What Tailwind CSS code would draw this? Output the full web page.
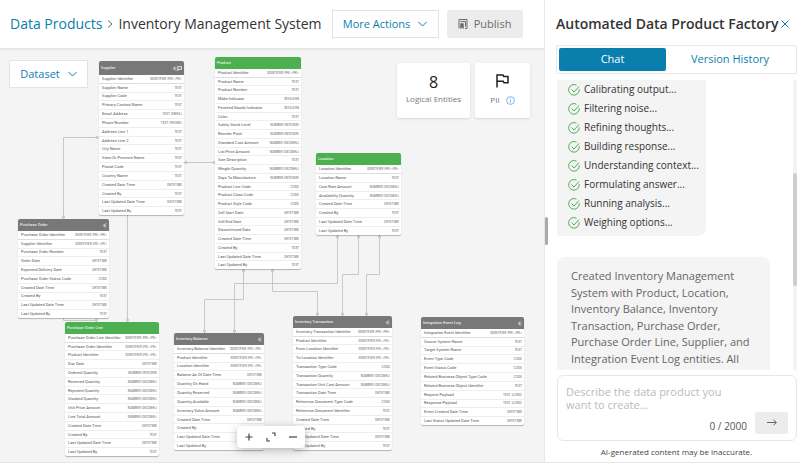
<!DOCTYPE html>
<html lang="en">
<head>
    <meta charset="UTF-8">
    <meta name="viewport" content="width=device-width, initial-scale=1.0">
    <title>Inventory Management System</title>

    <script src="https://cdn.jsdelivr.net/npm/@tailwindcss/browser@4"></script>
</head>
<body class="flex h-screen overflow-hidden bg-white font-['Open_Sans','Noto_Sans',sans-serif] text-[#333]">

    <main class="flex min-w-0 flex-1 flex-col border-b border-[#e6e6e6]">
        <!-- Top bar -->
        <header class="flex h-[50px] shrink-0 items-center border-b-2 border-[#e6e6e6] pl-[10px] whitespace-nowrap">
            <nav class="flex items-center text-sm" aria-label="Breadcrumb">
                <a href="#" class="text-[#0a7fad]">Data Products</a>
                <svg class="mx-[5px] h-2 w-[6px]" viewBox="0 0 6 8" fill="none" stroke="#666" stroke-width="1"><path d="M1 .5 5 4 1 7.500"/></svg>
                <h1>Inventory Management System</h1>
            </nav>
            <button class="ml-[10px] flex h-7 w-[107px] items-center justify-center gap-2 border border-[#e3e3e3] text-[11px] text-[#0a7fad]">
                More Actions
                <svg class="h-[6px] w-[9px]" viewBox="0 0 9 6" fill="none" stroke="currentColor"><path d="M.5 1 4.500 5 8.500 1"/></svg>
            </button>
            <button class="ml-2 flex h-7 w-[76px] items-center justify-center gap-[6px] rounded-xs bg-[#ececec] text-[11px] text-[#6b6b6b]">
                <svg class="h-[10px] w-[10px]" viewBox="0 0 10 10" fill="none" stroke="currentColor"><path d="M1 9.500V.5h8v9H7M2.500 2.500h5M7.500 2.500v5"/><path d="M2.500 4.500h3v5L4 8.500l-1.500 1z" fill="currentColor" stroke-width=".5"/></svg>
                Publish
            </button>
        </header>

        <!-- Diagram canvas -->
        <section class="relative flex-1 overflow-hidden bg-[#f4f4f4]">
            <svg class="absolute top-0 left-0 h-full w-full" fill="none" stroke="#c8c8c8" stroke-width="1" id="edges"></svg>
            <div id="nodes"></div>

            <button class="absolute top-[10px] left-[9px] flex h-7 w-[79px] items-center justify-center gap-2 border border-[#e3e3e3] bg-white text-[11px] text-[#0a7fad]">
                Dataset
                <svg class="h-[6px] w-[9px]" viewBox="0 0 9 6" fill="none" stroke="currentColor"><path d="M.5 1 4.500 5 8.500 1"/></svg>
            </button>

            <div class="absolute top-[13px] right-[14px] flex gap-[5px] text-center text-[8px] text-[#777]">
                <div class="flex h-[55px] w-[73px] flex-col items-center rounded-xs bg-white pt-2 shadow-sm">
                    <p class="text-base leading-[22px] text-[#222]">8</p>
                    <p class="leading-3 whitespace-nowrap">Logical Entities</p>
                </div>
                <div class="flex h-[55px] w-[55px] flex-col items-center rounded-xs bg-white pt-[11px] shadow-sm">
                    <svg class="h-[14px] w-[13px]" viewBox="0 0 13 14" fill="none" stroke="#222" stroke-width="1.500"><path d="M1 13.500V1h6l.7 1.600H12v6.200H8l-.7-1.600H1"/></svg>
                    <p class="mt-[6px] flex items-center gap-[6px] leading-3">
                        PII
                        <svg class="h-[9px] w-[9px]" viewBox="0 0 9 9" fill="none" stroke="#5aa2f0" stroke-width=".8"><circle cx="4.500" cy="4.500" r="3.900"/><path d="M4.500 4v2.700M4.500 2.200v.9"/></svg>
                    </p>
                </div>
            </div>

            <!-- Zoom controls -->
            <div class="absolute top-[376px] left-[237px] flex h-[22px] w-[68px] items-center justify-around rounded-sm bg-white px-[2px] text-[#444] shadow-[0_2px_8px_#0004]">
                <button aria-label="Zoom in"><svg class="h-2 w-2" viewBox="0 0 8 8" fill="none" stroke="currentColor" stroke-width="1.200"><path d="M4 .5v7M.5 4h7"/></svg></button>
                <button aria-label="Fit view"><svg class="h-[10px] w-[10px]" viewBox="0 0 10 10" fill="none" stroke="currentColor" stroke-width="1.200"><path d="M6 1h3v3M4 9H1V6"/></svg></button>
                <button aria-label="Zoom out"><svg class="h-2 w-2" viewBox="0 0 8 8" fill="none" stroke="currentColor" stroke-width="1.200"><path d="M0 4h8"/></svg></button>
            </div>
        </section>
    </main>

    <!-- Assistant panel -->
    <aside class="relative flex w-64 shrink-0 flex-col border-b border-l border-[#e6e6e6] pr-[3px] pl-[11px]">
        <div class="absolute top-[217px] left-0 h-7 w-[3px] rounded-xs bg-[#aaa]"></div>

        <div class="flex h-[45px] shrink-0 items-center justify-between pt-[3px] pr-2 whitespace-nowrap">
            <h2 class="text-sm font-semibold">Automated Data Product Factory</h2>
            <button aria-label="Close" class="text-[#0a7fad]"><svg class="h-2 w-2" viewBox="0 0 8 8" fill="none" stroke="currentColor"><path d="m.5.5 7 7M7.500.5l-7 7"/></svg></button>
        </div>

        <div class="flex h-[29px] shrink-0 rounded-xs border border-[#e8e8e8] p-[2px] text-[11px]">
            <button class="flex-1 basis-0 rounded-xs bg-[#0a7fad] text-white">Chat</button>
            <button class="w-32 text-[#0a7fad]">Version History</button>
        </div>

        <div class="mt-[6px] ml-px flex h-[290px] shrink-0 overflow-hidden">
            <div class="flex-1">
                <ul id="steps" class="w-[149px] rounded-br-lg bg-[#f4f4f4] pb-1 pl-[11px] text-[10px]"></ul>
                <p class="mt-[21px] h-32 w-[213px] rounded-t-lg bg-[#f4f4f4] pt-[11px] pr-4 pl-[14px] text-[11px] leading-normal text-[#666]">
                    Created Inventory Management System with Product, Location, Inventory Balance, Inventory Transaction, Purchase Order, Purchase Order Line, Supplier, and Integration Event Log entities. All
                </p>
            </div>
            <div class="w-1 bg-[#f3f3f3] pt-[93px]">
                <div class="h-[113px] rounded-xs bg-[#cdcdcd]"></div>
            </div>
        </div>

        <form class="mt-[5px] ml-px flex h-[66px] shrink-0 flex-col rounded-md border border-[#e6e6e6] px-2 pt-[7px]">
            <label for="prompt" class="sr-only">Data product description</label>
            <textarea id="prompt" class="h-7 w-44 shrink-0 resize-none overflow-hidden pt-[2px] text-[11px] leading-[13px] outline-none placeholder:text-[#bbb]" placeholder="Describe the data product you want to create..."></textarea>
            <div class="flex items-center justify-end gap-2 text-[10px] text-[#555]">
                <span class="pt-2">0 / 2000</span>
                <button type="button" aria-label="Send" class="flex h-[22px] w-[33px] items-center justify-center rounded-xs bg-[#ececec]">
                    <svg class="h-[7px] w-[10px]" viewBox="0 0 10 7" fill="none" stroke="#555" stroke-width=".9"><path d="M0 3.500h9.300M6.500.7l2.800 2.800-2.800 2.800"/></svg>
                </button>
            </div>
        </form>
        <p class="mt-1 text-center text-[8px] leading-[14px] text-[#444]">AI-generated content may be inaccurate.</p>
    </aside>

    <script>
        const PK = "IDENTIFIER (PK) <PK>", FK = "IDENTIFIER (FK) <FK>";
        const T = "TEXT", D = "DATETIME", C = "CODE", B = "BOOLEAN", N = "NUMBER (DECIMAL)", I = "NUMBER (INTEGER)";
        const audit = [["Created Date Time", D], ["Created By", T], ["Last Updated Date Time", D], ["Last Updated By", T]];

        const entities = [
            { name: "Supplier", x: 99, y: 11, w: 85, h: 154, pii: true, rows: [["Supplier Identifier", PK], ["Supplier Name", T], ["Supplier Code", T], ["Primary Contact Name", T], ["Email Address", "TEXT (EMAIL)"], ["Phone Number", "TEXT (PHONE)"], ["Address Line 1", T], ["Address Line 2", T], ["City Name", T], ["State Or Province Name", T], ["Postal Code", T], ["Country Name", T], ...audit] },
            { name: "Product", x: 215, y: 7, w: 86, h: 212, main: true, rows: [["Product Identifier", PK], ["Product Name", T], ["Product Number", T], ["Make Indicator", B], ["Finished Goods Indicator", B], ["Color", T], ["Safety Stock Level", I], ["Reorder Point", I], ["Standard Cost Amount", N], ["List Price Amount", N], ["Size Description", T], ["Weight Quantity", N], ["Days To Manufacture", I], ["Product Line Code", C], ["Product Class Code", C], ["Product Style Code", C], ["Sell Start Date", D], ["Sell End Date", D], ["Discontinued Date", D], ...audit] },
            { name: "Location", x: 316, y: 103, w: 85, h: 82, main: true, rows: [["Location Identifier", PK], ["Location Name", T], ["Cost Rate Amount", N], ["Availability Quantity", N], ...audit] },
            { name: "Purchase Order", x: 18, y: 169, w: 91, h: 99, rows: [["Purchase Order Identifier", PK], ["Supplier Identifier", FK], ["Purchase Order Number", T], ["Order Date", D], ["Expected Delivery Date", D], ["Purchase Order Status Code", C], ...audit] },
            { name: "Purchase Order Line", x: 65, y: 272, w: 94, h: 134, main: true, rows: [["Purchase Order Line Identifier", PK], ["Purchase Order Identifier", FK], ["Product Identifier", FK], ["Due Date", D], ["Ordered Quantity", I], ["Received Quantity", N], ["Rejected Quantity", N], ["Stocked Quantity", N], ["Unit Price Amount", N], ["Line Total Amount", N], ...audit] },
            { name: "Inventory Balance", x: 174, y: 283, w: 90, h: 117, rows: [["Inventory Balance Identifier", PK], ["Product Identifier", FK], ["Location Identifier", FK], ["Balance As Of Date Time", D], ["Quantity On Hand", N], ["Quantity Reserved", N], ["Quantity Available", N], ["Inventory Value Amount", N], ...audit] },
            { name: "Inventory Transaction", x: 293, y: 266, w: 99, h: 134, rows: [["Inventory Transaction Identifier", PK], ["Product Identifier", FK], ["From Location Identifier", FK], ["To Location Identifier", FK], ["Transaction Type Code", C], ["Transaction Quantity", N], ["Transaction Unit Cost Amount", N], ["Transaction Date Time", D], ["Reference Document Type Code", C], ["Reference Document Identifier", T], ...audit] },
            { name: "Integration Event Log", x: 421, y: 267, w: 103, h: 108, rows: [["Integration Event Identifier", PK], ["Source System Name", T], ["Target System Name", T], ["Event Type Code", C], ["Event Status Code", C], ["Related Business Object Type Code", C], ["Related Business Object Identifier", T], ["Request Payload", "TEXT (LONG)"], ["Response Payload", "TEXT (LONG)"], ["Event Created Date Time", D], ["Last Status Updated Date Time", D]] },
        ];

        const esc = s => s.replace(/</g, "&lt;").replace(/>/g, "&gt;");
        const share = `<svg class="h-[5px] w-[5px]" viewBox="0 0 6 6" fill="none" stroke="#ddd" stroke-width=".7"><path d="M5.500.5 1 3l4.500 2.500M3 3h2.500M3 1v4"/></svg>`;
        const flag = `<svg class="h-[5px] w-[5px]" viewBox="0 0 6 6" fill="none" stroke="#fff" stroke-width=".9"><path d="M1 6V.7h4.500v3.300H1"/></svg>`;

        document.getElementById("nodes").innerHTML = entities.map(e => `
            <article class="absolute flex flex-col overflow-hidden rounded-xs bg-white shadow-[0_1px_1px_#0004]" style="left:${e.x}px;top:${e.y}px;width:${e.w}px;height:${e.h}px">
                <header class="flex shrink-0 items-center justify-between px-[2px] text-[4px] text-white ${e.main ? "bg-[#4caf50]" : "bg-[#787878]"} ${e.pii ? "h-[14px]" : "h-3"}">
                    <h3 class="font-['Roboto','Open_Sans',sans-serif]">${e.name}</h3>
                    <span class="flex">${e.main ? "" : share}${e.pii ? flag : ""}</span>
                </header>
                <div class="min-h-0 flex-1">
                    <table class="h-full w-full whitespace-nowrap text-[#555]">
                        ${e.rows.map(r => `<tr class="border-b border-[#eee] first:border-[#ddd] last:border-0">
                            <td class="p-0 pl-[3px] font-['Roboto','Open_Sans',sans-serif] text-[4px] leading-[6px]">${r[0]}</td>
                            <td class="p-0 pr-[2px] text-right font-['Inter','Open_Sans',sans-serif] text-[3px] leading-[6px]">${esc(r[1])}</td>
                        </tr>`).join("")}
                    </table>
                </div>
            </article>`).join("");

        // connectors: path, then the end points that carry a small marker
        const edges = [
            ["M99 87.500H63.500V169", [97, 87.500], [63.500, 167]],
            ["M184 112.500H215", [186, 112.500], [214, 112.500]],
            ["M127.500 165V272", [127.500, 270]],
            ["M63.500 268V270.500H96.500V272", [96.500, 270]],
            ["M243.500 219V249.500H204.500V283", [243.500, 221], [204.500, 281]],
            ["M272.500 219V241.500H317.500V266", [272.500, 221], [317.500, 264]],
            ["M337.500 185V233.500H234.500V283", [337.500, 187], [234.500, 281]],
            ["M358.500 185V224.500H342.500V266", [358.500, 187], [342.500, 264]],
            ["M379.500 185V224.500H366.500V266", [379.500, 187], [366.500, 264]],
        ];
        document.getElementById("edges").innerHTML = edges.map(([d, ...ends]) =>
            `<path d="${d}"/>` + ends.map(([x, y]) => `<circle cx="${x}" cy="${y}" r="1" stroke="#999" stroke-width=".6" fill="#f4f4f4"/>`).join("")
        ).join("");

        const steps = ["Calibrating output...", "Filtering noise...", "Refining thoughts...", "Building response...", "Understanding context...", "Formulating answer...", "Running analysis...", "Weighing options..."];
        document.getElementById("steps").innerHTML = steps.map(s => `
            <li class="flex h-[19px] items-center gap-1 whitespace-nowrap">
                <svg class="h-3 w-3" viewBox="0 0 12 12" fill="none" stroke="#4caf50"><path d="M8.500 1.200A5.300 5.300 0 1 0 11.200 5.200M3.500 5.500 6 8l5-5.500"/></svg>
                ${s}
            </li>`).join("");
    </script>
</body>
</html>
